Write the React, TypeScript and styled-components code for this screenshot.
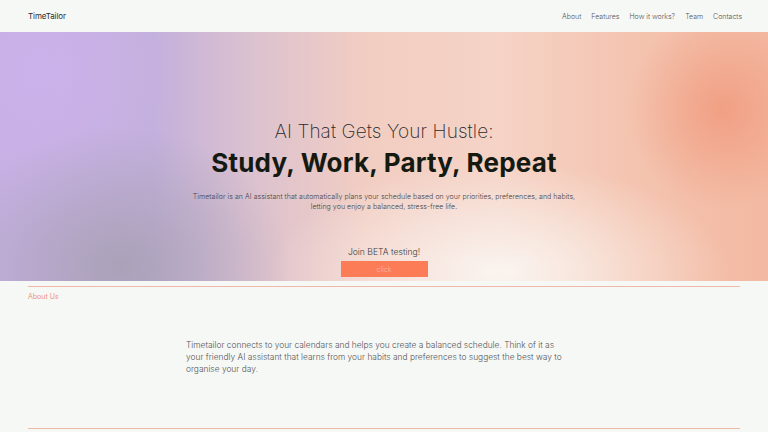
import styled, { createGlobalStyle } from 'styled-components'

const GlobalStyle = createGlobalStyle`
  html, body {
    margin: 0;
    padding: 0;
    background: #f6f8f5;
    font-family: Inter, "Open Sans", sans-serif;
  }
`

const Page = styled.div`
  width: 768px;
  min-height: 432px;
  background: #f6f8f5;
  overflow: hidden;
`

const Header = styled.header`
  display: flex;
  justify-content: space-between;
  align-items: center;
  height: 32px;
  padding: 0 26px 0 28px;
`

const Logo = styled.div`
  font-size: 8px;
  color: #2c2c2c;
  letter-spacing: -0.1px;
`

const Nav = styled.nav`
  display: flex;
  gap: 10px;
`

const NavLink = styled.a`
  font-size: 7px;
  font-weight: 300;
  color: #555;
  text-decoration: none;
`

const Hero = styled.section`
  height: 249px;
  display: flex;
  flex-direction: column;
  align-items: center;
  padding-top: 88px;
  box-sizing: border-box;
  background:
    radial-gradient(ellipse 95px 100px at 722px 78px, rgba(240, 150, 120, 0.75), rgba(240, 150, 120, 0) 100%),
    radial-gradient(ellipse 230px 110px at 500px 240px, rgba(250, 246, 242, 0.95), rgba(250, 246, 242, 0) 100%),
    radial-gradient(ellipse 170px 140px at 120px 235px, rgba(168, 160, 180, 0.9), rgba(168, 160, 180, 0) 100%),
    radial-gradient(ellipse 140px 170px at 40px 40px, rgba(205, 178, 236, 0.9), rgba(205, 178, 236, 0) 100%),
    linear-gradient(90deg, #c4afe0 0%, #c3b0dc 20%, #dcc2cf 33%, #f2cdc2 48%, #f5d3c6 65%, #f4c4b0 82%, #f3b9a2 100%);
`

const Kicker = styled.h2`
  margin: 0;
  font-size: 19px;
  font-weight: 200;
  color: #2a2a2a;
  letter-spacing: 0.1px;
`

const Title = styled.h1`
  margin: 4px 0 0;
  font-size: 26px;
  font-weight: 700;
  color: #151a10;
  letter-spacing: 0.2px;
`

const Lead = styled.p`
  margin: 14px 0 0;
  width: 392px;
  text-align: center;
  font-size: 7px;
  line-height: 10px;
  letter-spacing: 0.05px;
  font-weight: 300;
  color: #444;
`

const Beta = styled.div`
  margin-top: 35px;
  font-size: 8.6px;
  font-weight: 300;
  color: #3a3a3a;
`

const Button = styled.button`
  margin-top: 4px;
  width: 87px;
  height: 16px;
  border: none;
  background: #fd7c58;
  color: #fdb6a0;
  font-family: inherit;
  font-size: 7px;
  font-weight: 300;
  padding: 0;
`

const Divider = styled.hr<{ $top?: number }>`
  margin: ${(p) => p.$top ?? 0}px 28px 0;
  border: none;
  border-top: 1px solid #f0b8a8;
`

const Section = styled.section`
  padding: 5px 28px 0;
`

const SectionLabel = styled.div`
  font-size: 7px;
  color: #f09276;
  font-weight: 400;
`

const Body = styled.p`
  margin: 38px 0 0 158px;
  width: 386px;
  font-size: 8.4px;
  line-height: 12px;
  font-weight: 300;
  color: #555;
`

export default function App() {
  const links = ['About', 'Features', 'How it works?', 'Team', 'Contacts']
  return (
    <Page>
      <GlobalStyle />
      <Header>
        <Logo>TimeTailor</Logo>
        <Nav>
          {links.map((l) => (
            <NavLink key={l}>{l}</NavLink>
          ))}
        </Nav>
      </Header>
      <Hero>
        <Kicker>AI That Gets Your Hustle:</Kicker>
        <Title>Study, Work, Party, Repeat</Title>
        <Lead>
          Timetailor is an AI assistant that automatically plans your schedule based on your priorities, preferences, and habits,
          letting you enjoy a balanced, stress-free life.
        </Lead>
        <Beta>Join BETA testing!</Beta>
        <Button>click</Button>
      </Hero>
      <Divider $top={5} />
      <Section>
        <SectionLabel>About Us</SectionLabel>
        <Body>
          Timetailor connects to your calendars and helps you create a balanced schedule. Think of it as your friendly AI
          assistant that learns from your habits and preferences to suggest the best way to organise your day.
        </Body>
      </Section>
      <Divider $top={53} />
    </Page>
  )
}
